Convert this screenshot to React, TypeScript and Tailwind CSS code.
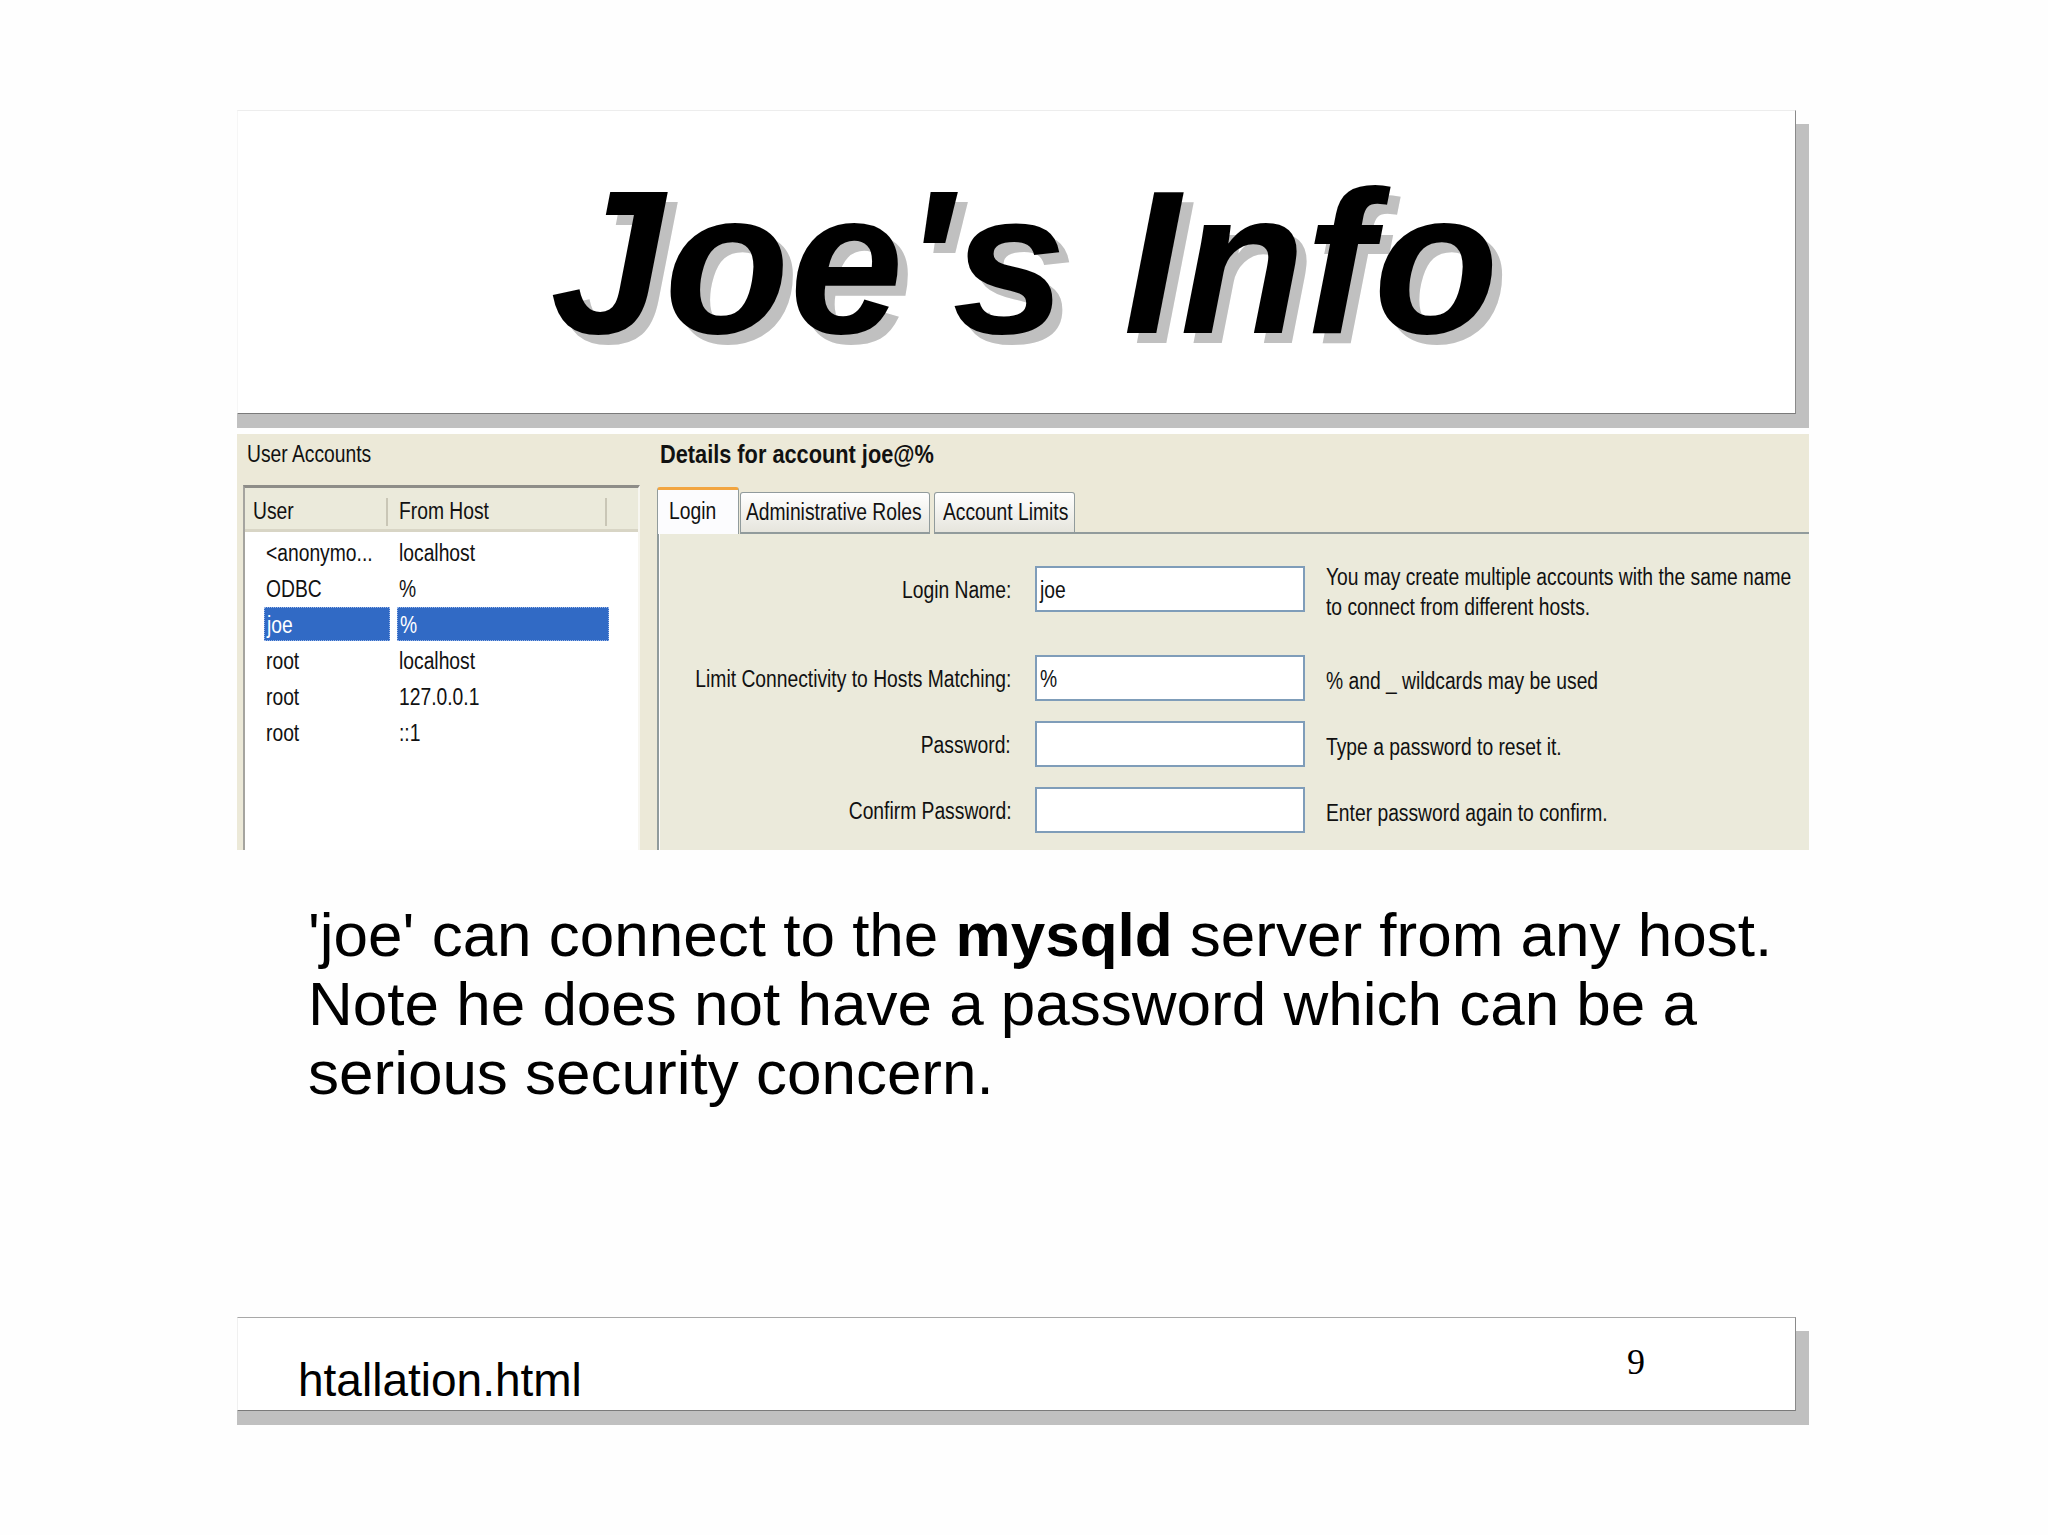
const ui = "font-['Liberation_Sans',Arial,sans-serif] text-[23.5px] text-[#111]";

// The screenshot's Tahoma text is squeezed horizontally; no narrow font is installed,
// so the glyphs are compressed with scale-x.
function Narrow({ children, right = false }: { children: React.ReactNode; right?: boolean }) {
  return (
    <span
      className={`inline-block whitespace-nowrap scale-x-[0.82] ${right ? 'origin-right' : 'origin-left'}`}
    >
      {children}
    </span>
  );
}

const accounts = [
  { user: '<anonymo...', host: 'localhost' },
  { user: 'ODBC', host: '%' },
  { user: 'joe', host: '%', selected: true },
  { user: 'root', host: 'localhost' },
  { user: 'root', host: '127.0.0.1' },
  { user: 'root', host: '::1' },
];

const fields = [
  {
    label: 'Login Name:',
    value: 'joe',
    help: ['You may create multiple accounts with the same name', 'to connect from different hosts.'],
    gap: 'mt-0',
  },
  { label: 'Limit Connectivity to Hosts Matching:', value: '%', help: ['% and _ wildcards may be used'], gap: 'mt-[43px]' },
  { label: 'Password:', value: '', help: ['Type a password to reset it.'], gap: 'mt-[20px]' },
  { label: 'Confirm Password:', value: '', help: ['Enter password again to confirm.'], gap: 'mt-[20px]' },
];

function UserList() {
  return (
    <div className="w-[420px] shrink-0 pl-[6px] pt-[7px]">
      <div className={`${ui} h-[27px] pl-[4px] leading-[27px]`}>
        <Narrow>User Accounts</Narrow>
      </div>
      {/* list view, cut off by the bottom of the screenshot */}
      <div className="mt-[17px] h-[400px] w-[397px] border-t-[3px] border-l-2 border-r-2 border-t-[#8e8d88] border-l-[#a5a49f] border-r-[#f7f6f0] bg-white">
        <div className={`${ui} flex h-[44px] items-center border-b-[3px] border-[#d8d5c5] bg-[#ebeadb] pt-[6px]`}>
          <div className="flex h-[28px] w-[143px] items-center border-r-2 border-[#c9c6b6] pl-[8px]">
            <Narrow>User</Narrow>
          </div>
          <div className="flex h-[28px] w-[219px] items-center border-r-2 border-[#c9c6b6] pl-[11px]">
            <Narrow>From Host</Narrow>
          </div>
        </div>
        <div className={`${ui} flex flex-col pt-[2px]`}>
          {accounts.map((a, i) => (
            <div key={i} className="flex h-[36px] items-center pl-[19px]">
              <div
                className={`flex h-[34px] w-[126px] items-center pl-[2px] pt-[3px] ${
                  a.selected ? 'border border-dotted border-[#9bb7e8] bg-[#316ac5] text-white' : ''
                }`}
              >
                <Narrow>{a.user}</Narrow>
              </div>
              <div
                className={`ml-[7px] flex h-[34px] w-[212px] items-center pl-[2px] pt-[3px] ${
                  a.selected ? 'border border-dotted border-[#9bb7e8] bg-[#316ac5] text-white' : ''
                }`}
              >
                <Narrow>{a.host}</Narrow>
              </div>
            </div>
          ))}
        </div>
      </div>
    </div>
  );
}

function AccountDetails() {
  return (
    <div className="flex min-w-0 flex-1 flex-col pt-[7px]">
      <div className="h-[27px] pl-[3px] font-['Liberation_Sans',Arial,sans-serif] text-[25px] font-bold leading-[27px] text-[#111]">
        <span className="inline-block origin-left scale-x-[0.87] whitespace-nowrap">Details for account joe@%</span>
      </div>
      {/* tabs */}
      <div className={`${ui} mt-[19px] flex h-[47px] items-end`}>
        <div className="flex h-[47px] w-[82px] shrink-0 items-center rounded-t-[3px] border-x border-t-[3px] border-x-[#919b9c] border-t-[#f2a540] bg-[#fcfcfe] pl-[11px]">
          <Narrow>Login</Narrow>
        </div>
        <div className="ml-px flex h-[42px] w-[190px] shrink-0 items-center rounded-t-[3px] border border-b-2 border-[#919b9c] bg-linear-to-b from-white to-[#e6e5dd] pl-[5px]">
          <Narrow>Administrative Roles</Narrow>
        </div>
        <div className="ml-[4px] flex h-[42px] w-[141px] shrink-0 items-center rounded-t-[3px] border border-b-2 border-[#919b9c] bg-linear-to-b from-white to-[#e6e5dd] pl-[8px]">
          <Narrow>Account Limits</Narrow>
        </div>
        <div className="h-[2px] flex-1 bg-[#919b9c]" />
      </div>
      {/* tab page */}
      <div className="flex-1 border-l-2 border-[#919b9c]">
        <div className="h-full border-l border-white bg-[#ebeadb] pt-[32px]">
          {fields.map((f) => (
            <div key={f.label} className={`${ui} ${f.gap} flex h-[46px] items-center`}>
              <div className="flex w-[351px] shrink-0 justify-end pt-[4px]">
                <Narrow right>{f.label}</Narrow>
              </div>
              <div className="ml-[24px] flex h-full w-[270px] shrink-0 items-center border-2 border-[#7f9db9] bg-white pl-[3px] pt-[3px]">
                <Narrow>{f.value}</Narrow>
              </div>
              <div className="ml-[21px] pt-[5px] leading-[30px]">
                {f.help.map((h) => (
                  <div key={h}>
                    <Narrow>{h}</Narrow>
                  </div>
                ))}
              </div>
            </div>
          ))}
        </div>
      </div>
    </div>
  );
}

export default function App() {
  return (
    <div className="flex h-[1535px] w-[2048px] flex-col overflow-hidden bg-[#fefefe] pl-[237px] pt-[110px] font-['Liberation_Sans',Arial,sans-serif] text-black">
      {/* title frame */}
      <div className="flex h-[304px] w-[1559px] shrink-0 items-center justify-center border border-t-[#ededed] border-l-[#f6f6f6] border-r-[#8a8a8a] border-b-[#7a7a7a] bg-white pb-[2px] pl-[16px] shadow-[13px_14px_0_#c0c0c0,0_14px_0_#c0c0c0]">
        <h1 className="text-[205px] font-bold italic leading-none [text-shadow:10px_10px_0_#c0c0c0]">Joe's Info</h1>
      </div>

      {/* MySQL Administrator screenshot */}
      <div className="mt-[20px] flex h-[416px] w-[1572px] shrink-0 overflow-hidden bg-[#ece9d8]">
        <UserList />
        <AccountDetails />
      </div>

      <p className="ml-[71px] mt-[50px] text-[62px] leading-[69px] text-black">
        'joe' can connect to the <b>mysqld</b> server from any host.
        <br />
        Note he does not have a password which can be a
        <br />
        serious security concern.
      </p>

      {/* footer frame */}
      <div className="mt-[210px] flex h-[94px] w-[1559px] shrink-0 justify-between border border-t-[#a8a8a8] border-l-[#f0f0f0] border-r-[#8a8a8a] border-b-[#7a7a7a] bg-white shadow-[13px_14px_0_#c0c0c0,0_14px_0_#c0c0c0]">
        <div className="flex items-end pb-[7px] pl-[60px] text-[46px] leading-none">htallation.html</div>
        <div className="mr-[150px] pt-[26px] font-['Liberation_Serif',serif] text-[36px] leading-none">9</div>
      </div>
    </div>
  );
}
